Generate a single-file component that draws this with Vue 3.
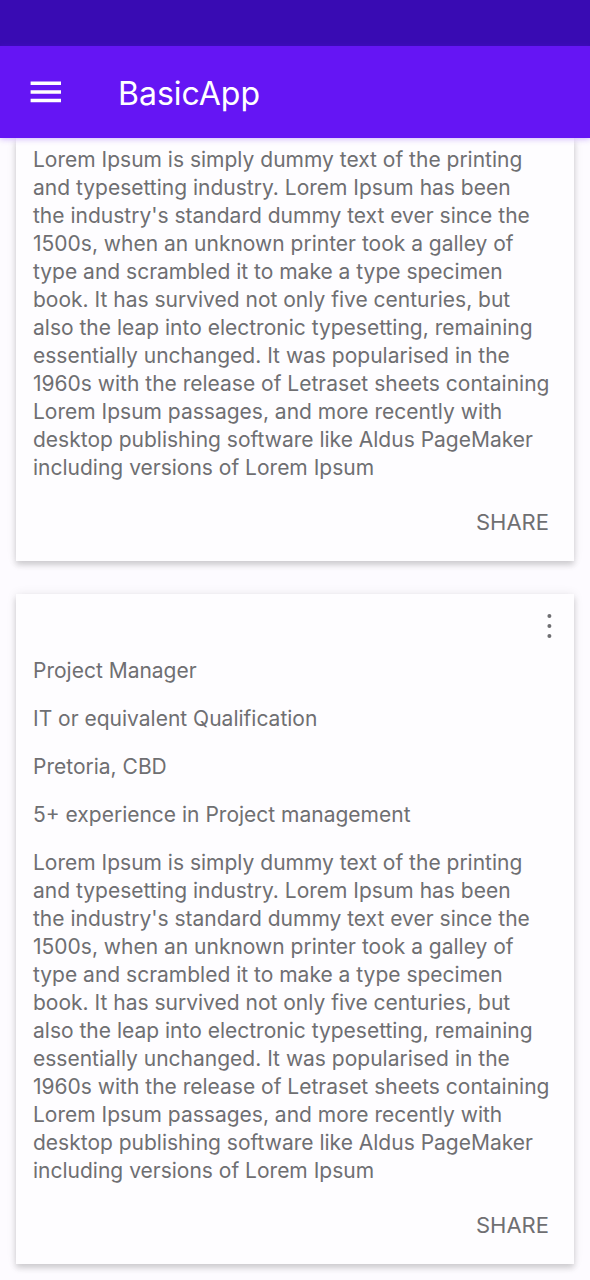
<script setup>
const body = [
  'Lorem Ipsum is simply dummy text of the printing',
  'and typesetting industry. Lorem Ipsum has been',
  "the industry's standard dummy text ever since the",
  '1500s, when an unknown printer took a galley of',
  'type and scrambled it to make a type specimen',
  'book. It has survived not only five centuries, but',
  'also the leap into electronic typesetting, remaining',
  'essentially unchanged. It was popularised in the',
  '1960s with the release of Letraset sheets containing',
  'Lorem Ipsum passages, and more recently with',
  'desktop publishing software like Aldus PageMaker',
  'including versions of Lorem Ipsum'
]
const details = [
  'Project Manager',
  'IT or equivalent Qualification',
  'Pretoria, CBD',
  '5+ experience in Project management'
]
</script>

<template>
  <div class="app">
    <div class="status"></div>
    <header class="bar">
      <button class="menu" aria-label="Open menu">
        <svg width="32" height="22" viewBox="0 0 32 22" aria-hidden="true">
          <path d="M.6 2.2H31M.6 11H31M.6 19.5H31" stroke="#fff" stroke-width="3.4" />
        </svg>
      </button>
      <h1>BasicApp</h1>
    </header>
    <main class="list">
      <article class="card first">
        <p class="body"><template v-for="line in body" :key="line">{{ line }}<br></template></p>
        <div class="actions"><button class="share">SHARE</button></div>
      </article>
      <article class="card">
        <div class="top">
          <button class="more" aria-label="More options">
            <svg width="6" height="26" viewBox="0 0 6 26" aria-hidden="true" fill="#6f6f72">
              <circle cx="3.4" cy="3" r="2" /><circle cx="3.4" cy="13" r="2" /><circle cx="3.4" cy="23" r="2" />
            </svg>
          </button>
        </div>
        <p v-for="d in details" :key="d" class="detail">{{ d }}</p>
        <p class="body"><template v-for="line in body" :key="line">{{ line }}<br></template></p>
        <div class="actions"><button class="share">SHARE</button></div>
      </article>
    </main>
  </div>
</template>

<style>
body { background: #fdfbff; }
</style>

<style scoped>
.app { font-family: Inter, "Liberation Sans", sans-serif; color: #6f6f72; }
.status { height: 46px; background: #390bb3; }
.bar { position: relative; display: flex; align-items: center; height: 92px; padding-left: 30px; gap: 56px; background: #6515f4; box-shadow: 0 1px 6px rgba(101, 21, 244, 0.3); }
button { border: 0; padding: 0; background: none; font: inherit; color: inherit; display: block; cursor: pointer; }
svg { display: block; }
h1 { margin: 0; padding-top: 4px; font-size: 32px; line-height: 40px; font-weight: 400; color: #fff; }
.list { display: grid; grid-template-columns: minmax(0, 1fr); gap: 33px; padding: 0 16px 16px; }
.card { padding: 0 16px 25px 17px; background: #fefdff; box-shadow: 0 4px 6px rgba(0, 0, 0, 0.16), 0 0 10px rgba(0, 0, 0, 0.08); }
.first { padding-top: 8px; }
p { margin: 0; font-size: 21px; line-height: 28px; white-space: nowrap; }
.detail { margin-bottom: 20px; }
.top { display: flex; justify-content: flex-end; align-items: flex-start; height: 63px; padding: 19px 6px 0 0; box-sizing: border-box; }
.actions { display: flex; justify-content: flex-end; padding: 26px 9px 0 0; }
.share { font-size: 22px; line-height: 28px; }
</style>
